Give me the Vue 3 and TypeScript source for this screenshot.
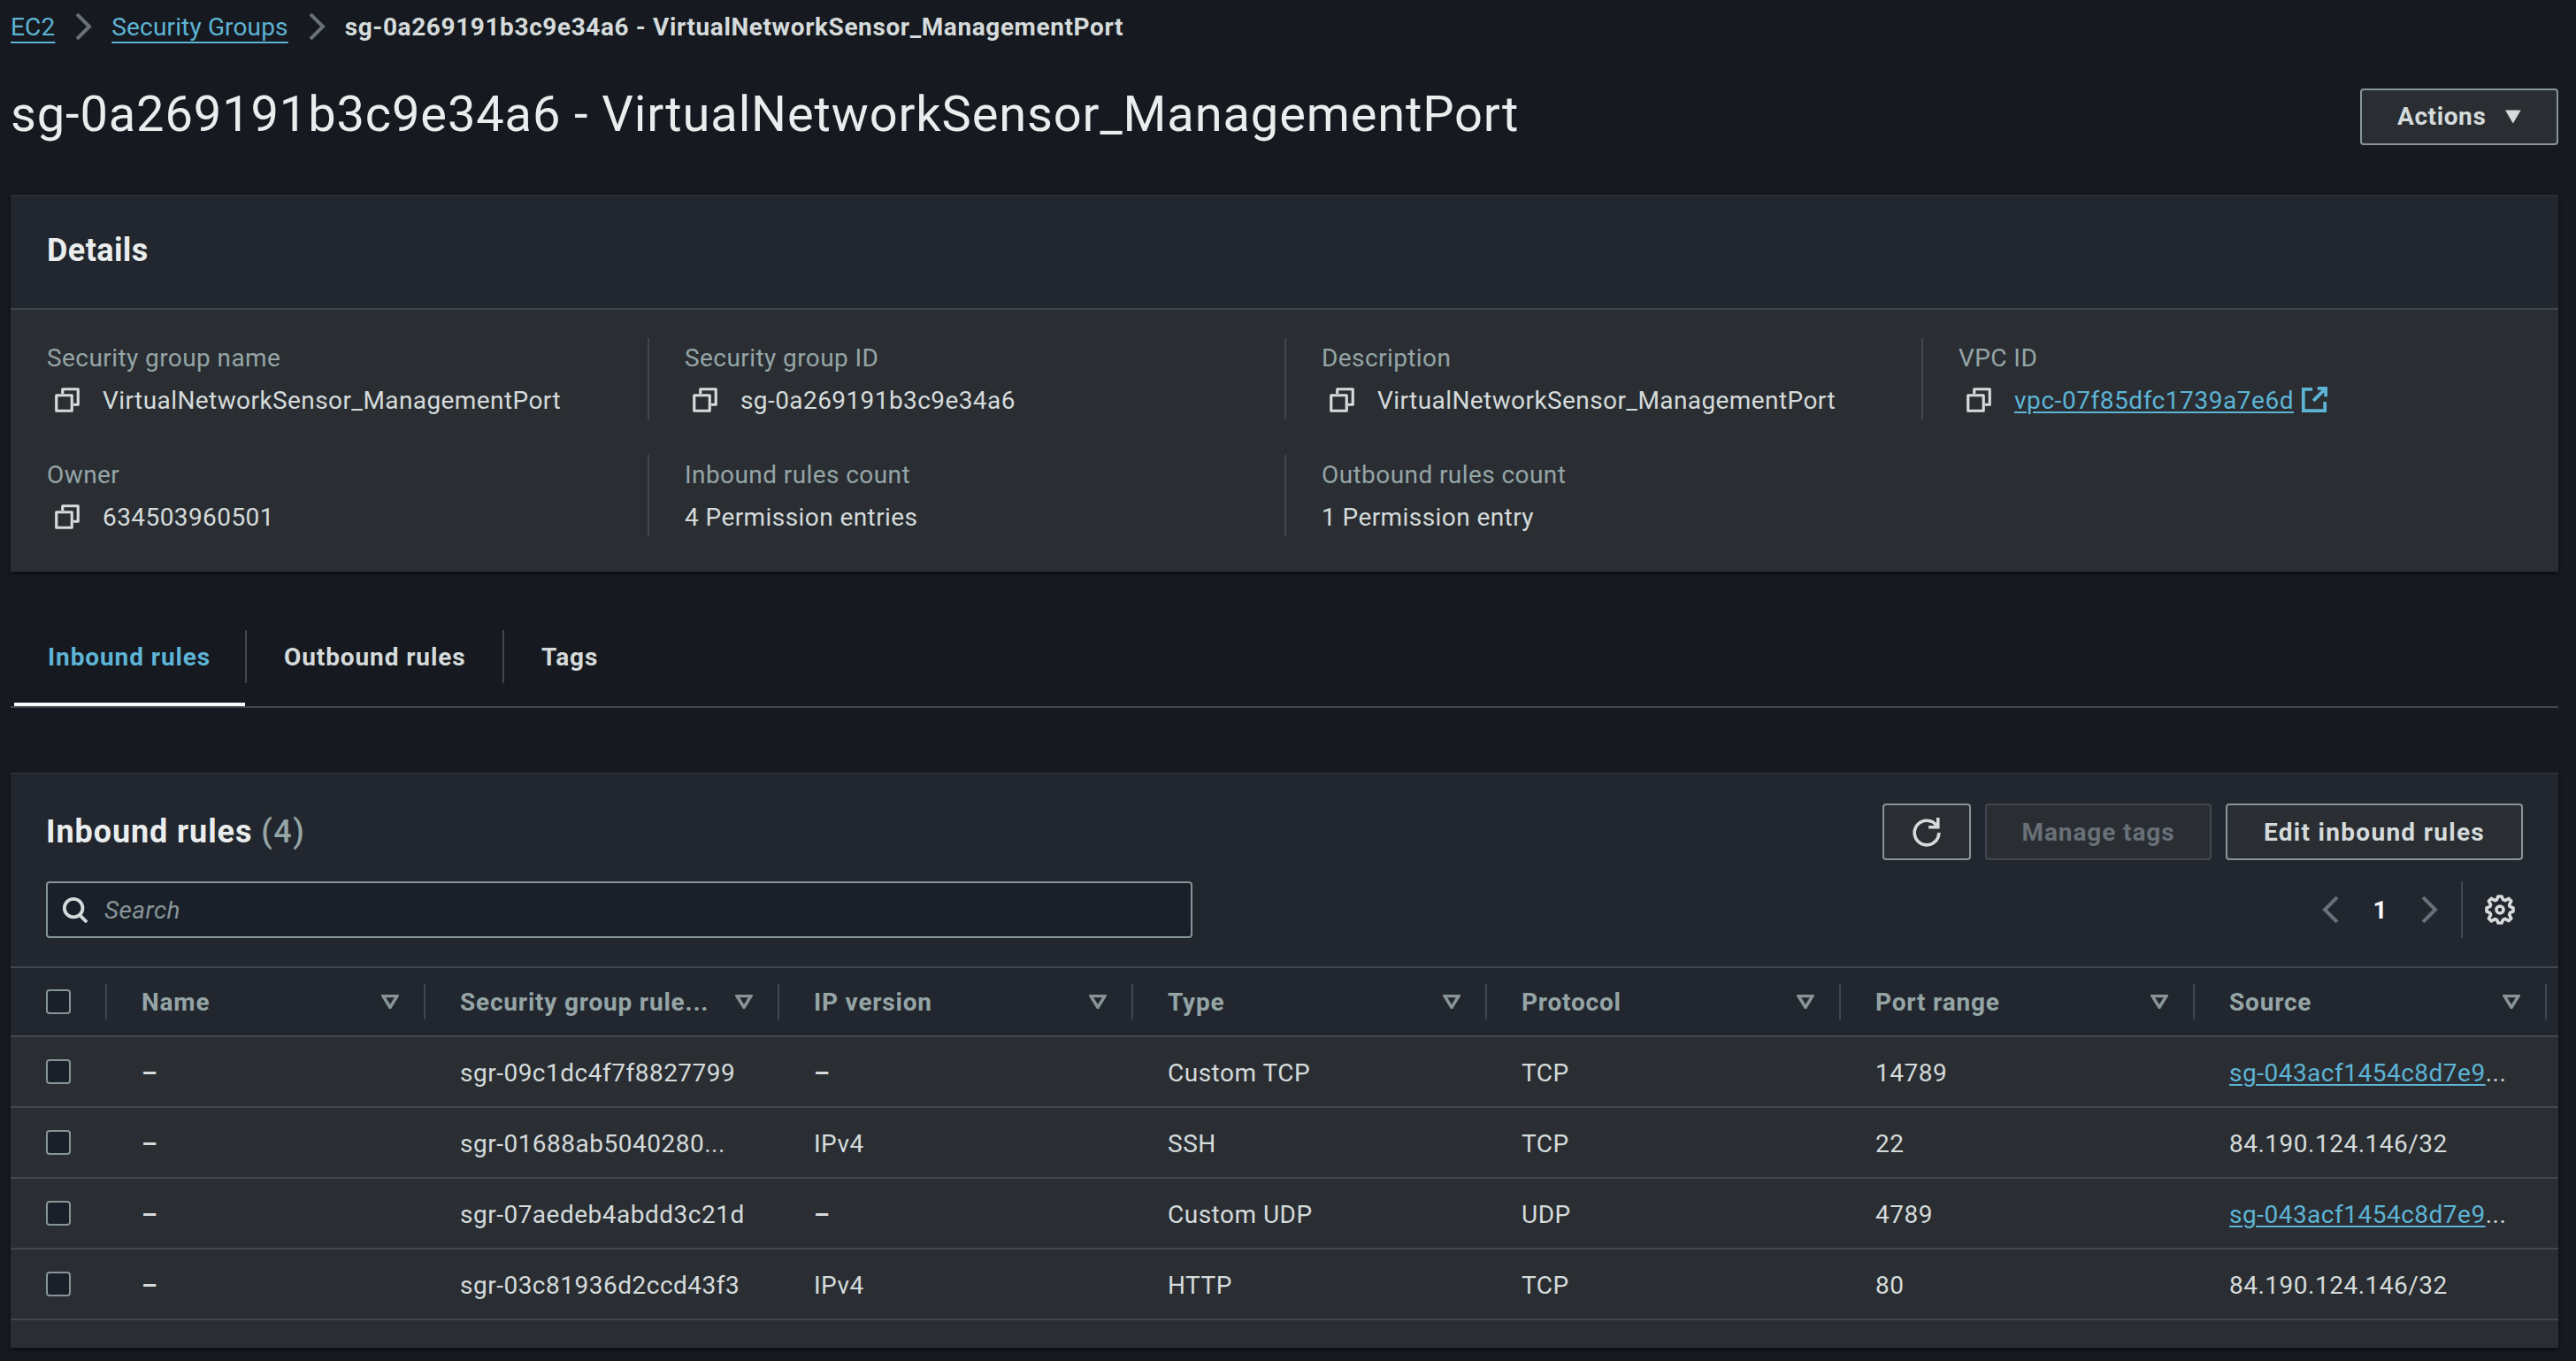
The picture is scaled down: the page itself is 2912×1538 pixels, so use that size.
<script setup lang="ts">
interface Detail {
  label: string
  value: string
  copy: boolean
  link?: boolean
}

interface Rule {
  id: string
  version: string
  type: string
  protocol: string
  port: string
  source: string
  sourceLink: boolean
}

const details: Detail[] = [
  { label: 'Security group name', value: 'VirtualNetworkSensor_ManagementPort', copy: true },
  { label: 'Security group ID', value: 'sg-0a269191b3c9e34a6', copy: true },
  { label: 'Description', value: 'VirtualNetworkSensor_ManagementPort', copy: true },
  { label: 'VPC ID', value: 'vpc-07f85dfc1739a7e6d', copy: true, link: true },
  { label: 'Owner', value: '634503960501', copy: true },
  { label: 'Inbound rules count', value: '4 Permission entries', copy: false },
  { label: 'Outbound rules count', value: '1 Permission entry', copy: false },
]

const columns = ['Name', 'Security group rule...', 'IP version', 'Type', 'Protocol', 'Port range', 'Source']

const rules: Rule[] = [
  { id: 'sgr-09c1dc4f7f8827799', version: '–', type: 'Custom TCP', protocol: 'TCP', port: '14789', source: 'sg-043acf1454c8d7e9', sourceLink: true },
  { id: 'sgr-01688ab5040280...', version: 'IPv4', type: 'SSH', protocol: 'TCP', port: '22', source: '84.190.124.146/32', sourceLink: false },
  { id: 'sgr-07aedeb4abdd3c21d', version: '–', type: 'Custom UDP', protocol: 'UDP', port: '4789', source: 'sg-043acf1454c8d7e9', sourceLink: true },
  { id: 'sgr-03c81936d2ccd43f3', version: 'IPv4', type: 'HTTP', protocol: 'TCP', port: '80', source: '84.190.124.146/32', sourceLink: false },
]
</script>

<template>
  <div class="page">
    <nav class="crumbs">
      <a class="link">EC2</a>
      <svg class="crumb-sep" viewBox="0 0 20 30"><path d="M3 1l14 14L3 29" /></svg>
      <a class="link">Security Groups</a>
      <svg class="crumb-sep" viewBox="0 0 20 30"><path d="M3 1l14 14L3 29" /></svg>
      <span class="crumb-current">sg-0a269191b3c9e34a6 - VirtualNetworkSensor_ManagementPort</span>
    </nav>

    <header class="title-row">
      <h1>sg-0a269191b3c9e34a6 - VirtualNetworkSensor_ManagementPort</h1>
      <button class="btn actions">
        Actions
        <svg class="caret" viewBox="0 0 21 18"><path d="M0 0h21L10.500 18z" /></svg>
      </button>
    </header>

    <section class="card details">
      <div class="details-head"><h2>Details</h2></div>
      <div class="details-grid">
        <div v-for="item in details" :key="item.label" class="detail">
          <div class="detail-label">{{ item.label }}</div>
          <div class="detail-value">
            <svg v-if="item.copy" class="copy" viewBox="0 0 16 16">
              <path d="M1 5h10v10H1z" />
              <path d="M5 4V1h10v10h-3" />
            </svg>
            <a v-if="item.link" class="link">{{ item.value }}</a>
            <span v-else>{{ item.value }}</span>
            <svg v-if="item.link" class="external" viewBox="0 0 16 16">
              <path d="M7 1.500H1.500v13h13V9" />
              <path d="M10 1h5v5M15 1L7.500 8.500" />
            </svg>
          </div>
        </div>
      </div>
    </section>

    <div class="tabs">
      <div class="tab tab-active"><span>Inbound rules</span></div>
      <div class="tab tab-out"><span>Outbound rules</span></div>
      <div class="tab tab-tags"><span>Tags</span></div>
    </div>

    <section class="card rules">
      <div class="rules-head">
        <div class="rules-top">
          <h2 class="rules-title">Inbound rules <span class="count">(4)</span></h2>
          <div class="rules-actions">
            <button class="btn refresh">
              <svg viewBox="0 0 16 16">
                <path d="M14.500 8.500A6.500 6.500 0 1 1 8 2c2.500 0 4.600 1.400 5.700 3.500" />
                <path d="M14 .5V5.500H9" />
              </svg>
            </button>
            <button class="btn manage" disabled>Manage tags</button>
            <button class="btn edit">Edit inbound rules</button>
          </div>
        </div>
        <div class="rules-tools">
          <div class="search">
            <svg viewBox="0 0 16 16"><circle cx="7" cy="7" r="5.500" /><path d="M11 11.500l4 4" /></svg>
            <span>Search</span>
          </div>
          <div class="pager">
            <svg class="pager-chevron" viewBox="0 0 20 30"><path d="M17 1L3 15l14 14" /></svg>
            <span class="page-num">1</span>
            <svg class="pager-chevron" viewBox="0 0 20 30"><path d="M3 1l14 14L3 29" /></svg>
            <div class="pager-sep"></div>
            <svg class="gear" viewBox="-0.5 -0.5 17 17">
              <path d="M13.300 5.200l1.100-2.100L13 1.700l-2.100 1.100c-.3-.2-.7-.3-1.100-.4L9 .5H7l-.8 1.900c-.3.1-.7.2-1 .4L3.100 1.700 1.700 3.100l1.100 2.100c-.2.3-.3.700-.4 1L.5 7v2l1.900.8c.1.400.3.700.4 1.100l-1.100 2.100 1.400 1.400 2.100-1.100c.3.200.7.300 1.100.4L7 15.500h2l.8-1.900c.4-.1.700-.3 1.100-.4l2.100 1.100 1.400-1.400-1.100-2.100c.2-.3.300-.7.400-1.100L15.500 9V7l-1.900-.8c-.1-.3-.3-.7-.3-1z" />
              <circle cx="8" cy="8" r="2" />
            </svg>
          </div>
        </div>
      </div>

      <div class="table-row table-head">
        <div class="cell-check"><span class="checkbox"></span></div>
        <div v-for="col in columns" :key="col" class="th">
          <div class="th-inner">
            <span>{{ col }}</span>
            <svg class="filter" viewBox="0 0 20 16"><path d="M2 1.500h16L10 14.500z" /></svg>
          </div>
        </div>
      </div>

      <div v-for="rule in rules" :key="rule.id" class="table-row table-body">
        <div class="cell-check"><span class="checkbox"></span></div>
        <div class="td dash">–</div>
        <div class="td">{{ rule.id }}</div>
        <div class="td" :class="{ dash: rule.version === '–' }">{{ rule.version }}</div>
        <div class="td">{{ rule.type }}</div>
        <div class="td">{{ rule.protocol }}</div>
        <div class="td">{{ rule.port }}</div>
        <div class="td">
          <template v-if="rule.sourceLink"><a class="link">{{ rule.source }}</a>...</template>
          <template v-else>{{ rule.source }}</template>
        </div>
      </div>
    </section>
  </div>
</template>

<style>
html,
body {
  background: #16191f;
}
</style>

<style scoped>
.page {
  box-sizing: border-box;
  width: 2912px;
  height: 1538px;
  padding: 0 20px 0 12px;
  overflow: hidden;
  background: #16191f;
  color: #d5dbdb;
  font-family: Roboto, "Noto Sans", sans-serif;
  font-size: 28px;
  letter-spacing: 0.42px;
}

.link {
  color: #5db4d5;
  text-decoration: underline;
  text-underline-offset: 3px;
  text-decoration-thickness: 2px;
}

/* breadcrumb */
.crumbs {
  display: flex;
  align-items: center;
  height: 60px;
}

.crumbs .link {
  letter-spacing: 0.15px;
  text-underline-offset: 7px;
}

.crumb-sep {
  width: 20px;
  height: 30px;
  margin: 0 22px;
  fill: none;
  stroke: #687078;
  stroke-width: 4;
}

.crumb-current {
  font-weight: 700;
  letter-spacing: 0.6px;
}

/* title */
.title-row {
  display: flex;
  align-items: center;
  justify-content: space-between;
  margin-top: 40px;
  height: 63px;
}

h1 {
  margin: 0;
  padding-bottom: 6px;
  font-size: 56px;
  font-weight: 400;
  letter-spacing: 0.87px;
  color: #eaeded;
}

.btn {
  box-sizing: border-box;
  height: 64px;
  border: 2px solid #879596;
  border-radius: 4px;
  background: #2a2e33;
  color: #d5dbdb;
  font-family: inherit;
  font-size: 28px;
  font-weight: 700;
  letter-spacing: 0.9px;
  padding: 0 40px;
}

.actions {
  display: flex;
  align-items: center;
  gap: 22px;
  width: 224px;
  letter-spacing: 0.6px;
}

.caret {
  width: 21px;
  height: 18px;
  fill: #d5dbdb;
}

/* cards */
.card {
  box-shadow: 0 2px 4px rgba(0, 0, 0, 0.5);
}

.details {
  margin-top: 57px;
  background: #2a2e33;
}

.details-head {
  display: flex;
  align-items: center;
  box-sizing: border-box;
  height: 130px;
  padding: 0 0 4px 41px;
  background: #22262e;
  border-top: 2px solid #2b2f36;
  border-bottom: 2px solid #414750;
}

h2 {
  margin: 0;
  font-size: 36px;
  font-weight: 700;
  letter-spacing: 0.4px;
  color: #eaeded;
}

.details-grid {
  display: grid;
  grid-template-columns: repeat(4, 720px);
  row-gap: 40px;
  padding: 32px 0 40px;
}

.detail {
  box-sizing: border-box;
  height: 92px;
  padding-left: 40px;
  border-left: 2px solid #414750;
}

.detail:nth-child(4n + 1) {
  padding-left: 41px;
  border-left: none;
}

.detail-label {
  height: 46px;
  line-height: 46px;
  color: #95a5a6;
}

.detail-value {
  display: flex;
  align-items: center;
  height: 46px;
  padding-top: 1px;
}

.copy {
  flex: none;
  width: 28px;
  height: 28px;
  margin: 0 26px 0 9px;
  fill: none;
  stroke: #d5dbdb;
  stroke-width: 1.800;
  stroke-linejoin: round;
}

.detail-value .link {
  letter-spacing: 0.55px;
}

.external {
  flex: none;
  width: 30px;
  height: 30px;
  margin-left: 8px;
  fill: none;
  stroke: #5db4d5;
  stroke-width: 2;
}

/* tabs */
.tabs {
  display: flex;
  box-sizing: border-box;
  height: 106px;
  margin-top: 48px;
  padding-left: 4px;
  border-bottom: 2px solid #414750;
}

.tab {
  box-sizing: border-box;
  height: 104px;
  padding-top: 18px;
  border-bottom: 4px solid transparent;
  font-weight: 700;
  letter-spacing: 0.9px;
}

.tab span {
  display: flex;
  align-items: center;
  height: 60px;
  padding-left: 42px;
  border-left: 2px solid #414750;
}

.tab-active {
  width: 261px;
  color: #5db4d5;
  border-bottom-color: #fafafa;
}

.tab-active span {
  padding-left: 38px;
  border-left: none;
}

.tab-out {
  width: 291px;
}

.tab-tags {
  width: 200px;
}

/* rules table */
.rules {
  margin-top: 73px;
  background: #2a2e33;
  padding-bottom: 31px;
}

.rules-head {
  box-sizing: border-box;
  height: 221px;
  padding: 33px 40px 0;
  background: #22262e;
  border-top: 2px solid #2b2f36;
  border-bottom: 2px solid #414750;
}

.rules-top {
  display: flex;
  align-items: center;
  justify-content: space-between;
  height: 64px;
}

.rules-title {
  letter-spacing: 0.9px;
}

.count {
  font-weight: 500;
  letter-spacing: 1.500px;
  color: #95a5a6;
}

.rules-actions {
  display: flex;
  gap: 16px;
}

.refresh {
  display: flex;
  align-items: center;
  justify-content: center;
  width: 100px;
  padding: 0;
}

.refresh svg {
  width: 34px;
  height: 34px;
  fill: none;
  stroke: #d5dbdb;
  stroke-width: 1.700;
}

.manage {
  width: 256px;
  padding: 0;
  border-color: #414750;
  color: #687078;
}

.edit {
  width: 336px;
  padding: 0;
  letter-spacing: 1.300px;
}

.rules-tools {
  display: flex;
  align-items: center;
  justify-content: space-between;
  margin-top: 24px;
  height: 64px;
}

.search {
  display: flex;
  align-items: center;
  box-sizing: border-box;
  width: 1296px;
  height: 64px;
  padding-left: 16px;
  border: 2px solid #879596;
  border-radius: 4px;
  background: #1a2029;
  color: #879596;
  font-style: italic;
}

.search svg {
  width: 30px;
  height: 30px;
  margin-right: 18px;
  fill: none;
  stroke: #d5dbdb;
  stroke-width: 2;
}

.pager {
  display: flex;
  align-items: center;
  margin-right: 10px;
}

.pager-chevron {
  width: 20px;
  height: 30px;
  fill: none;
  stroke: #687078;
  stroke-width: 4;
}

.page-num {
  margin: 0 37px 0 38px;
  font-weight: 700;
  color: #fafafa;
}

.pager-sep {
  width: 2px;
  height: 64px;
  margin: 0 25px 0 26px;
  background: #414750;
}

.gear {
  width: 34px;
  height: 34px;
  margin-right: -1px;
  fill: none;
  stroke: #d5dbdb;
  stroke-width: 1.800;
  stroke-linejoin: round;
}

.table-row {
  display: grid;
  grid-template-columns: 107px 360px repeat(6, 400px);
  align-items: center;
  box-sizing: border-box;
  height: 80px;
  border-bottom: 2px solid #414750;
}

.table-head {
  height: 78px;
  background: #22262e;
  font-weight: 700;
  letter-spacing: 0.8px;
  color: #95a5a6;
}

.cell-check {
  display: flex;
  padding-left: 40px;
}

.checkbox {
  box-sizing: border-box;
  width: 28px;
  height: 28px;
  border: 2px solid #879596;
  border-radius: 4px;
  background: #1a2029;
}

.th-inner {
  display: flex;
  align-items: center;
  justify-content: space-between;
  box-sizing: border-box;
  height: 40px;
  padding: 0 28px 0 39px;
  border-left: 2px solid #414750;
}

.th:last-child .th-inner {
  border-right: 2px solid #414750;
}

.filter {
  flex: none;
  width: 20px;
  height: 16px;
  fill: none;
  stroke: #879596;
  stroke-width: 3.500;
}

.td {
  padding: 2px 0 0 41px;
  white-space: nowrap;
  letter-spacing: 0.5px;
}

.dash {
  font-weight: 700;
}
</style>
